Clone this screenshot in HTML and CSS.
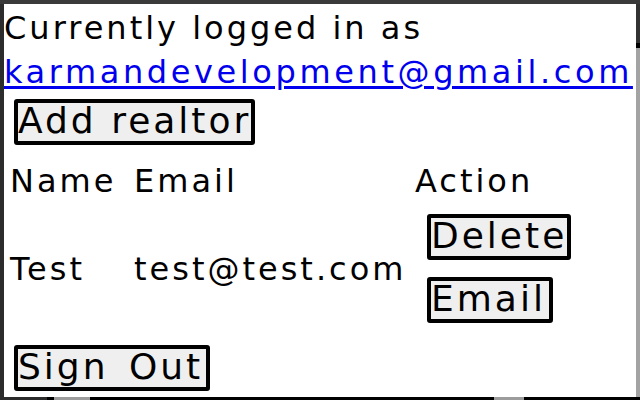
FILE: index.html
```html
<!DOCTYPE html>
<html lang="en">
<head>
<meta charset="utf-8">
<title>Realtors</title>
<link rel="stylesheet" href="styles.css">
</head>
<body>
<div class="window">
  <div class="topbar"></div>
  <div class="leftbar"></div>
  <main class="viewport">
    <p class="status">Currently logged in as <a class="user-link" href="#">karmandevelopment@gmail.com</a></p>
    <div class="toolbar"><button class="btn" type="button">Add realtor</button></div>
    <table class="realtors">
      <colgroup>
        <col class="col-name">
        <col class="col-email">
        <col class="col-action">
      </colgroup>
      <thead>
        <tr><th>Name</th><th>Email</th><th>Action</th></tr>
      </thead>
      <tbody>
        <tr>
          <td class="cell-text">Test</td>
          <td class="cell-text">test@test.com</td>
          <td>
            <div class="actions">
              <button class="btn" type="button">Delete</button>
              <button class="btn btn-email" type="button">Email</button>
            </div>
          </td>
        </tr>
      </tbody>
    </table>
    <div class="footer"><button class="btn btn-signout" type="button">Sign Out</button></div>
  </main>
  <div class="vscroll">
    <div class="vscroll-track"></div>
    <div class="vscroll-gap"></div>
    <div class="vscroll-thumb"></div>
  </div>
  <div class="hscroll">
    <div class="hs-dark"></div>
    <div class="hs-gap"></div>
    <div class="hs-thumb"></div>
    <div class="hs-space"></div>
    <div class="hs-thumb hs-thumb-2"></div>
    <div class="hs-rest"></div>
  </div>
</div>
</body>
</html>
```

FILE: styles.css
```css
html, body {
  margin: 0;
  padding: 0;
  background: #000;
}

.window {
  width: 640px;
  height: 400px;
  display: grid;
  grid-template-columns: 4px 632px 4px;
  grid-template-rows: 4px 393px 3px;
  overflow: hidden;
}

.topbar {
  grid-column: 1 / -1;
  grid-row: 1;
  background: #3a3a3a;
}

.leftbar {
  grid-column: 1;
  grid-row: 2 / 4;
  background: #2c2c2c;
}

.viewport {
  grid-column: 2;
  grid-row: 2;
  background: #fff;
  overflow: hidden;
  padding-top: 2px;
  font-family: "DejaVu Sans", Verdana, sans-serif;
  font-size: 32px;
  letter-spacing: 3px;
  color: #000;
}

.status {
  margin: 0;
  line-height: 44px;
}

.user-link {
  color: #0000ee;
  letter-spacing: 3.6px;
  text-decoration: underline;
  text-decoration-thickness: 3px;
  text-underline-offset: 3px;
  white-space: nowrap;
}

.toolbar {
  margin: 5px 0 0 10px;
}

.btn {
  display: inline-block;
  margin: 0;
  padding: 0 0 2px;
  border: 4px solid #000;
  border-radius: 3px;
  background: #efefef;
  color: #000;
  font-family: "DejaVu Sans", Verdana, sans-serif;
  font-size: 36px;
  letter-spacing: 3px;
  line-height: 36px;
  white-space: nowrap;
}

.btn-email {
  padding-right: 3px;
}

.btn-signout {
  word-spacing: 6px;
  padding-right: 3px;
}

.realtors {
  margin-top: 5px;
  border-collapse: separate;
  border-spacing: 4px;
  font-size: 32px;
}

.col-name { width: 120px; }
.col-email { width: 277px; }

.realtors th {
  padding: 2px;
  text-align: left;
  font-weight: normal;
  line-height: 50px;
  white-space: nowrap;
}

.realtors td {
  padding: 2px;
  vertical-align: middle;
  white-space: nowrap;
}

.cell-text {
  line-height: 44px;
  padding-top: 6px;
}

.actions {
  display: flex;
  flex-direction: column;
  align-items: flex-start;
  gap: 17px;
  margin-left: 12px;
}

.footer {
  margin: 16px 0 0 10px;
}

.vscroll {
  grid-column: 3;
  grid-row: 2 / 4;
  display: flex;
  flex-direction: column;
  background: #000;
}

.vscroll-track {
  height: 39px;
  background: #333;
}

.vscroll-gap {
  height: 5px;
  background: #000;
}

.vscroll-thumb {
  height: 349px;
  background: #a3a3a3;
}

.hscroll {
  grid-column: 2 / 3;
  grid-row: 3;
  display: flex;
  background: #000;
}

.hs-dark {
  width: 43px;
  background: #2c2c2c;
}

.hs-gap {
  width: 7px;
}

.hs-thumb {
  width: 36px;
  background: #9c9c9c;
}

.hs-space {
  width: 404px;
}

.hs-thumb-2 {
  width: 30px;
}

.hs-rest {
  flex: 1;
}
```
